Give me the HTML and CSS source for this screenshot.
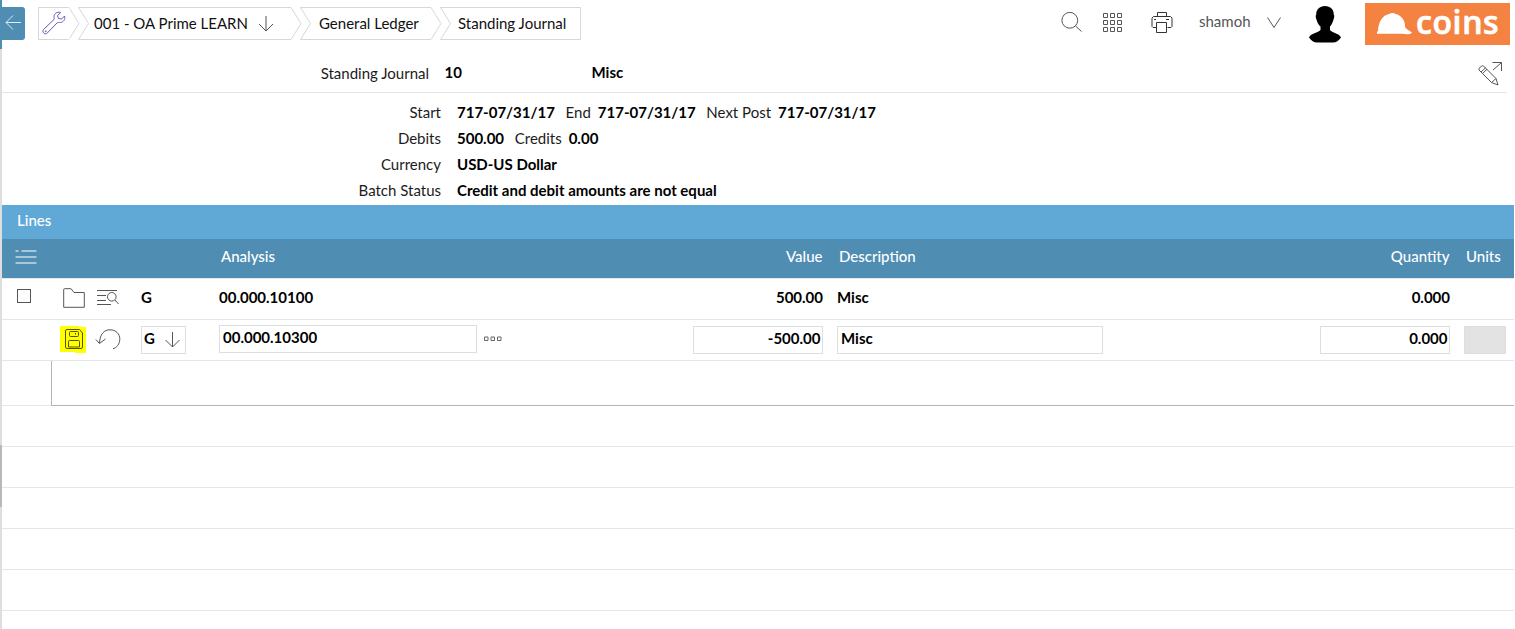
FILE: index.html
```
<!DOCTYPE html>
<html lang="en">
<head>
<meta charset="utf-8">
<title>Standing Journal</title>
<link rel="stylesheet" href="styles.css">
</head>
<body>
<div class="app">
  <aside class="rail"><div class="rail-top"></div><div class="rail-track"></div><div class="rail-thumb"></div><div class="rail-track rail-rest"></div></aside>
  <main class="main">
    <header class="topbar">
      <button class="back" aria-label="Back"><svg width="23" height="33" viewBox="0 0 23 33"><path d="M19 15.500H4M11 8.500L4 15.500L11 22.500"/></svg></button>
      <nav class="crumbs">
        <a class="crumb crumb-tool">
          <svg class="shape" width="42" height="33"><path d="M31 .5H.5V32.500H31L41 16.500Z"/><path class="gap" d="M31 .5V32.500"/></svg>
          <svg class="wrench" width="24" height="24" viewBox="0 0 24 24"><path d="M18.500 1.500C15.500 .5 12 2.500 12 5.500C12 7 12.500 7.800 12 8.500L1.500 18.500C-.2 20.500 2 24 4.800 22.500L15 12C16 11 17 11.500 18.500 11.500C21.500 11 23.500 8.500 22.500 5L19.500 8L16.500 7.500L15.500 4.800Z"/><circle cx="3.800" cy="20.300" r=".5"/></svg>
        </a>
        <a class="crumb crumb-company">
          <svg class="shape" width="224" height="33"><path d="M.5 .5H213L223 16.500L213 32.500H.5L10.500 16.500Z"/></svg>
          <span>001 - OA Prime LEARN</span>
          <svg class="down" width="16" height="18" viewBox="0 0 16 18"><path d="M8 1V16M1 9L8 16L15 9"/></svg>
        </a>
        <a class="crumb crumb-ledger">
          <svg class="shape" width="143" height="33"><path d="M.5 .5H131L141 16.500L131 32.500H.5L10.500 16.500Z"/></svg>
          <span>General Ledger</span>
        </a>
        <a class="crumb crumb-journal">
          <svg class="shape" width="141" height="33"><path d="M.5 .5H140.500V32.500H.5L10.500 16.500Z"/></svg>
          <span>Standing Journal</span>
        </a>
      </nav>
      <div class="tools">
        <svg class="search" width="22" height="22" viewBox="0 0 22 22"><circle cx="8.800" cy="8.300" r="7.900"/><path d="M14.500 14L20.500 19.500"/></svg>
        <svg class="apps" width="20" height="22" viewBox="0 0 20 22"><path d="M.5 1.500h4v4h-4zM7.500 1.500h4v4h-4zM14.500 1.500h4v4h-4zM.5 8.500h4v4h-4zM7.500 8.500h4v4h-4zM14.500 8.500h4v4h-4zM.5 15.500h4v4h-4zM7.500 15.500h4v4h-4zM14.500 15.500h4v4h-4z"/></svg>
        <svg class="printer" width="22" height="23" viewBox="0 0 22 23"><path d="M6.500 5.500V1.500H15.500V5.500M5.500 16.500H2L1 15.500V7L2.500 5.500H19.500L21 7V15.500L20 16.500H16.500M5.500 11.500H15.500V21.500H5.500ZM3 8.500H5M15 8.500H18"/></svg>
        <span class="user">shamoh</span>
        <svg class="chev" width="14" height="12" viewBox="0 0 14 12"><path d="M.5 .5L7 10.500L13.500 .5"/></svg>
        <svg class="avatar" width="34" height="38" viewBox="0 0 34 38"><path d="M17 1C22.500 1 26 4.500 25.800 10C26.500 10 26.500 12 25.400 15C24.500 18 23.500 20 22 21.500V25C24 28 31 28 33 32.500C31 35.500 28 37.500 25 37.500H9C6 37.500 3 35.500 1 32.500C3 28 10 28 12.500 25V21.500C10.500 20 9.500 18 8.600 15C7.500 12 7.500 10 8.200 10C8 4.500 11.500 1 17 1Z"/></svg>
        <div class="logo">
          <svg width="37" height="24" viewBox="0 0 37 24"><path d="M2 19.500C2 10 7 3 13 2C16 .5 18 .8 19.500 2C25 3 29 8 29 14C29 17 33 18 36 20.500C35.500 22.500 30 22.500 26 21.800H1V19.500Z"/></svg>
          <span>coins</span>
        </div>
      </div>
    </header>

    <section class="titlebar">
      <span class="title-label">Standing Journal</span><b class="title-no">10</b><b class="title-name">Misc</b>
      <svg class="edit" width="25" height="25" viewBox="0 0 25 25"><path d="M14.500 1.500H23.500V10M23.500 1.500L15 9M1 9Q.5 8 1.500 7L3.500 5Q4.500 4.500 5.500 5L18 17.500L20 24L13.500 21.500ZM3 11L7.500 6.800M4.500 12.500L9 8.300M13.500 21.500L18 17.500"/></svg>
    </section>

    <section class="details">
      <div class="detail"><span class="label">Start</span><b>717-07/31/17</b><span>End</span><b>717-07/31/17</b><span>Next Post</span><b>717-07/31/17</b></div>
      <div class="detail"><span class="label">Debits</span><b>500.00</b><span>Credits</span><b>0.00</b></div>
      <div class="detail"><span class="label">Currency</span><b>USD-US Dollar</b></div>
      <div class="detail"><span class="label">Batch Status</span><b>Credit and debit amounts are not equal</b></div>
    </section>

    <section class="lines">
      <h2>Lines</h2>
      <div class="row head">
        <svg class="menu" width="22" height="16" viewBox="0 0 22 16"><path d="M.5 2H3.500M6.500 2H21.500M.5 8H21.500M.5 14H21.500"/></svg>
        <span class="c-analysis">Analysis</span><span class="c-value">Value</span><span class="c-desc">Description</span><span class="c-qty">Quantity</span><span class="c-units">Units</span>
      </div>
      <div class="row item">
        <i class="check"></i>
        <span class="c-icons">
          <svg width="22" height="20" viewBox="0 0 22 20"><path d="M.7 1.500Q.7 .7 1.500 .7H8L11 4.500H21.300V19.300H.7Z"/></svg>
          <svg width="22" height="17" viewBox="0 0 22 17"><path d="M0 1.500H20M0 6.500H9M0 11.500H9M0 15.500H14"/><circle cx="14.800" cy="7.800" r="4.300"/><path d="M18 11L21.500 15"/></svg>
        </span>
        <span class="c-type">G</span><span class="c-analysis">00.000.10100</span><span class="c-value">500.00</span><span class="c-desc">Misc</span><span class="c-qty">0.000</span>
      </div>
      <div class="row edit-row">
        <span class="c-icons">
          <span class="save"><svg width="26" height="28" viewBox="0 0 26 28"><path class="mark" d="M0 1H19V2H26V28H15V27H0Z"/><path d="M5.500 6Q5.500 4.500 7 4.500H19.500L22.500 8V22Q22.500 23.500 21 23.500H7Q5.500 23.500 5.500 22ZM10.500 6.500H17.500Q18.500 6.500 18.500 7.500V10.500Q18.500 11.500 17.500 11.500H10.500Q9.500 11.500 9.500 10.500V7.500Q9.500 6.500 10.500 6.500ZM15.500 8V9.500M8.500 22V16.500Q8.500 15.500 9.500 15.500H18.500Q19.500 15.500 19.500 16.500V22Z"/></svg></span>
          <svg class="undo" width="26" height="21" viewBox="0 0 26 21"><path d="M4.500 14C5 5 9 .8 15 .8C21 .8 25 5 24.800 10.500C24.600 15 22 18.500 18 19.800M.8 10.500L4.500 14.500L10.500 10"/></svg>
        </span>
        <span class="c-type field select">G<svg width="16" height="18" viewBox="0 0 16 18"><path d="M8.500 1V16M1.500 9L8.500 16L15.500 9"/></svg></span>
        <span class="c-analysis field">00.000.10300</span>
        <svg class="more" width="18" height="6" viewBox="0 0 18 6"><path d="M.5 1H4V4.500H.5ZM7 1H10.500V4.500H7ZM13.500 1H17V4.500H13.500Z"/></svg>
        <span class="c-value field">-500.00</span><span class="c-desc field">Misc</span><span class="c-qty field">0.000</span><span class="c-units field disabled"></span>
      </div>
      <div class="subrow"><div class="subpanel"></div></div>
      <div class="row"></div><div class="row"></div><div class="row"></div><div class="row"></div><div class="row"></div><div class="row"></div>
    </section>
  </main>
</div>
</body>
</html>
```
FILE: styles.css
```
* { box-sizing: border-box; }
body { margin: 0; background: #fff; color: #1c1c1c; font: 400 15px/20px Lato, "Open Sans", sans-serif; }
svg { display: block; flex: none; fill: none; stroke: #555; stroke-width: 1; }
b { font-weight: 700; color: #000; }
.app { display: flex; width: 1514px; height: 629px; overflow: hidden; }
.rail { width: 2px; flex: none; display: flex; flex-direction: column; }
.rail-top { height: 49px; background: #4f8db3; }
.rail-track { height: 396px; background: #dedede; }
.rail-thumb { height: 62px; background: #b8b8b8; }
.rail-rest { height: 122px; }
.main { flex: 1; min-width: 0; }

.topbar { height: 48px; display: flex; align-items: flex-start; }
.back { width: 23px; height: 33px; margin-top: 7px; padding: 0; border: 0; border-radius: 0 3px 3px 0; background: #4f8db3; }
.back svg { stroke: #e0edf4; }
.crumbs { display: flex; margin: 7px 0 0 13px; color: #111; }
.crumb { position: relative; height: 33px; display: flex; align-items: center; white-space: nowrap; }
.crumb span { position: relative; top: -1px; }
.shape { position: absolute; left: 0; top: 0; stroke: #d5d7d9; }
.gap { stroke: #fff; }
.crumb-tool { width: 40px; padding-left: 4px; }
.wrench { position: relative; top: -1px; stroke: #6b56b8; }
.crumb-company { width: 222px; padding-left: 16px; }
.down { margin-left: 10px; }
.crumb-ledger { width: 140px; padding-left: 19px; }
.crumb-journal { width: 141px; padding-left: 18px; }
.tools { display: flex; align-items: flex-start; margin-left: auto; padding-right: 4px; }
.search { margin: 12px 20px 0 0; }
.apps { margin: 12px 28px 0 0; stroke: #555; }
.printer { margin: 11px 26px 0 0; stroke: #333; }
.user { width: 53px; margin: 11px 15px 0 0; color: #555; }
.chev { margin: 17px 27px 0 0; }
.avatar { margin: 5px 23px 0 0; fill: #000; stroke: none; }
.logo { width: 145px; height: 42px; margin-top: 3px; padding: 9px 0 0 11px; display: flex; background: #f48241; color: #fff; }
.logo svg { fill: #fff; stroke: none; }
.logo span { margin: -2px 0 0 3px; font: 600 32px/24px "Open Sans", sans-serif; letter-spacing: .6px; -webkit-text-stroke: .7px #fff; }

.titlebar { height: 45px; width: 1505px; display: flex; align-items: center; border-bottom: 1px solid #e4e4e4; }
.title-label { width: 427px; margin-top: 6px; text-align: right; }
.title-no { width: 131px; margin: 4px 0 0 15.500px; }
.title-name { margin: 4px 0 0 16px; }
.edit { margin: 7px 4px 0 auto; }

.details { height: 112px; padding-top: 6px; }
.detail { display: flex; height: 26px; line-height: 26px; white-space: nowrap; }
.detail b { margin: 0 4px 0 7px; }
.detail span { margin-left: 6.700px; }
.detail .label { width: 439px; margin: 0 9px 0 0; text-align: right; }

.lines h2 { height: 34px; margin: 0; padding-left: 15px; background: #60a9d7; color: #fff; font: inherit; font-weight: 500; line-height: 31px; }
.row { height: 41px; display: grid; grid-template-columns: 56px 82px 77px 474px 132px 12px 266px 217px 132px 14px 50px; align-items: center; border-bottom: 1px solid #e6e6e6; }
.head { height: 40px; padding-bottom: 5px; background: #4f8db3; border-bottom: 1px solid #e4e8ea; color: #fff; font-weight: 500; }
.menu { margin: 1px 0 0 13px; stroke: #a8c7da; stroke-width: 2; }
.item, .edit-row { font-weight: 700; color: #000; }
.item { padding-bottom: 3px; line-height: 18px; }
.item > span:not(.c-icons) { margin-top: -2px; }
.check { grid-column: 1; width: 14px; height: 14px; margin: -3px 0 0 15px; border: 1px solid #555; }
.c-icons { grid-column: 2; grid-row: 1; display: flex; align-items: center; gap: 12px; padding-left: 5px; }
.c-type { grid-column: 3; grid-row: 1; padding-left: 1px; }
.c-analysis { grid-column: 4; grid-row: 1; padding-left: 2px; }
.c-value { grid-column: 5; grid-row: 1; text-align: right; }
.c-desc { grid-column: 7; grid-row: 1; }
.c-qty { grid-column: 9; grid-row: 1; text-align: right; }
.c-units { grid-column: 11; grid-row: 1; padding-left: 2px; }
.head .c-analysis { padding-left: 4px; }
.head .c-value { padding-right: .5px; }
.head .c-desc { padding-left: 4px; }
.head .c-qty { padding-right: .5px; }
.item .c-desc { padding-left: 2px; }
.edit-row .c-icons { margin-top: -2px; padding-left: 2px; gap: 9px; }
.field { height: 28px; padding: 0 2px; border: 1px solid #dcdfe0; line-height: 23px; }
.select { display: flex; width: 45px; margin-left: 1px; }
.select svg { margin: 4px 0 0 9px; }
.edit-row .c-analysis { width: 258px; margin: -2px 0 0 2px; padding-left: 3px; }
.mark { fill: #ff0; stroke: none; }
.save svg { stroke: #555400; }
.more { grid-column: 4; grid-row: 1; margin: -3px 0 0 267px; stroke: #666; }
.edit-row .c-value { width: 130px; margin-left: 2px; padding-right: 1.500px; }
.edit-row .c-desc { margin-left: 2px; width: 266px; padding-left: 3px; }
.edit-row .c-qty { width: 130px; margin-left: 2px; padding-right: 1.500px; }
.c-units.disabled { width: 42px; background: #e3e3e3; }
.subrow { height: 45px; padding-left: 49px; border-bottom: 1px solid #e6e6e6; }
.subpanel { height: 45px; border-left: 1px solid #b5b5b5; border-bottom: 1px solid #b5b5b5; }
```
